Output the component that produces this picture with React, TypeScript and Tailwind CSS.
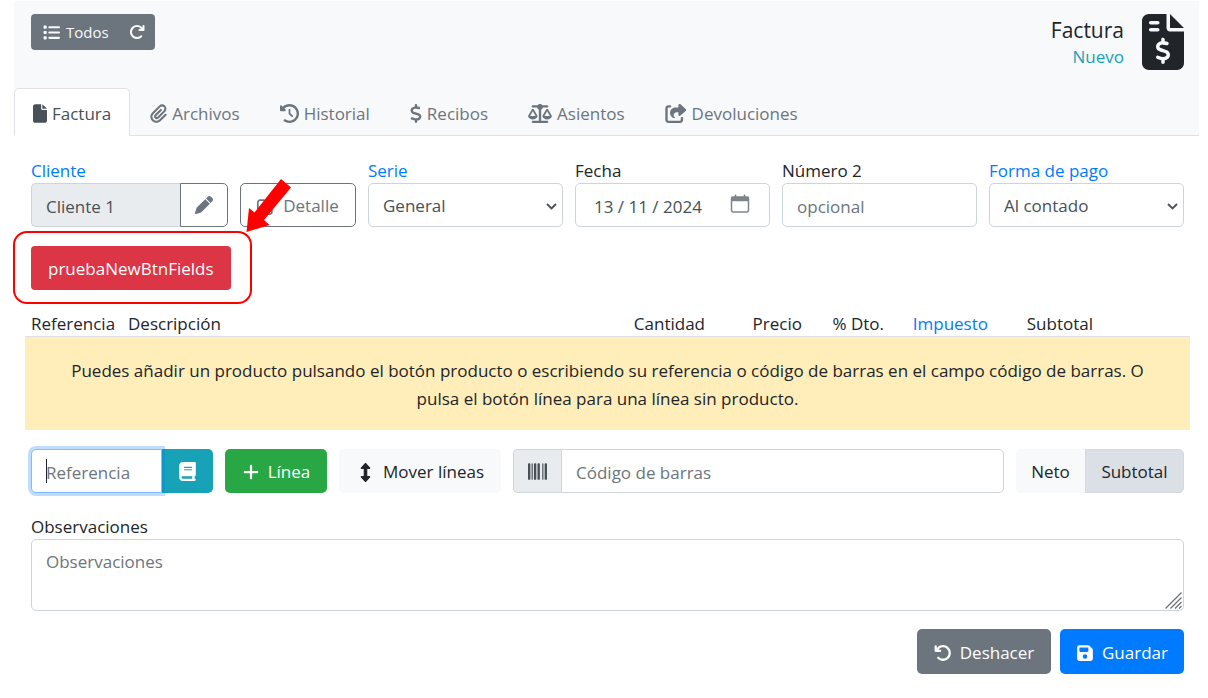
import { FaArrowRotateLeft, FaArrowRotateRight, FaBarcode, FaBook, FaClockRotateLeft, FaDollarSign, FaFile, FaFileInvoiceDollar, FaFloppyDisk, FaList, FaPaperclip, FaPen, FaPlus, FaRegPenToSquare, FaScaleBalanced, FaShareFromSquare, FaUpDown } from "react-icons/fa6";

const tabs = [
  { name: "Factura", icon: FaFile, iconClass: "w-3.5 h-[19px]" },
  { name: "Archivos", icon: FaPaperclip, iconClass: "w-[17px] h-[19px]" },
  { name: "Historial", icon: FaClockRotateLeft, iconClass: "w-[19px] h-[19px]" },
  { name: "Recibos", icon: FaDollarSign, iconClass: "w-3 h-[19px]" },
  { name: "Asientos", icon: FaScaleBalanced, iconClass: "w-6 h-[19px]" },
  { name: "Devoluciones", icon: FaShareFromSquare, iconClass: "w-[22px] h-[19px]" },
];

const inputClass = "h-11 w-full min-w-0 rounded-[5px] border border-[#ced4da] bg-white px-3.5 pt-0.5 text-[#495057] placeholder:text-[#6c757d] outline-none";

function Header() {
  return (
    <header className="bg-[#f8f9fa] mt-px">
      <div className="flex items-start justify-between pt-[13px] pl-[17px] pr-[15px] h-[87px]">
        <div className="flex rounded-[4px] bg-[#6c757d] text-[#f8f9fa] text-[15px]">
          <button type="button" className="flex items-center gap-1.5 h-9 pl-3 pr-2.5">
            <FaList size={17} />
            Todos
          </button>
          <button type="button" aria-label="Recargar" className="h-9 px-2.5">
            <FaArrowRotateRight size={16} />
          </button>
        </div>
        <div className="flex items-start gap-[18px]">
          <div className="text-right pt-0.5">
            <h1 className="text-[21px] leading-[28px] text-[#212529]">Factura</h1>
            <p className="leading-[26px] text-[#17a2b8]">Nuevo</p>
          </div>
          <FaFileInvoiceDollar size={56} className="w-[42px] text-[#212529]" />
        </div>
      </div>
      <nav className="flex border-b border-[#dee2e6]">
        {tabs.map((tab, index) => {
          const TabIcon = tab.icon;
          return (
            <a
              key={tab.name}
              href="#"
              className={
                index === 0
                  ? "flex items-center gap-[5px] h-12 px-[18px] pt-[3px] -mb-px rounded-t-[5px] border border-b-white border-[#dee2e6] bg-white text-[#495057]"
                  : "flex items-center gap-[5px] h-12 px-[19px] pt-[3px] -mb-px border border-transparent text-[#6c757d]"
              }
            >
              <TabIcon className={tab.iconClass} />
              {tab.name}
            </a>
          );
        })}
      </nav>
    </header>
  );
}

function Chevron() {
  return (
    <svg className="pointer-events-none absolute right-1.5 top-[19px]" width="11" height="9" viewBox="0 0 11 9" fill="none" stroke="#495057" strokeWidth="1.8">
      <path d="M1 2l4.5 4.5L10 2" />
    </svg>
  );
}

function SelectField({ id, label, value }: { id: string; label: string; value: string }) {
  return (
    <div>
      <label htmlFor={id} className="block leading-6 text-[#007bff]">{label}</label>
      <div className="relative">
        <select id={id} className={`${inputClass} appearance-none`}>
          <option>{value}</option>
        </select>
        <Chevron />
      </div>
    </div>
  );
}

function Fields() {
  return (
    <div className="grid grid-cols-[minmax(0,5fr)_repeat(4,minmax(0,3fr))] gap-3 pt-[23px]">
      <div>
        <label htmlFor="cliente" className="block leading-6 text-[#007bff]">Cliente</label>
        <div className="flex gap-3">
          <div className="flex flex-1 min-w-0">
            <input id="cliente" readOnly value="Cliente 1" className="h-11 flex-1 min-w-0 rounded-l-[5px] border border-r-0 border-[#ced4da] bg-[#e9ecef] px-3.5 pt-0.5 text-[#495057] outline-none" />
            <button type="button" aria-label="Editar cliente" className="flex items-center justify-center h-11 w-12 rounded-r-[5px] border border-[#6c757d] text-[#6c757d]">
              <FaPen size={18} />
            </button>
          </div>
          <button type="button" className="flex items-center justify-center gap-2 h-11 w-[116px] pt-0.5 rounded-[5px] border border-[#6c757d] text-[#6c757d]">
            <FaRegPenToSquare size={18} />
            Detalle
          </button>
        </div>
      </div>
      <SelectField id="serie" label="Serie" value="General" />
      <div>
        <label htmlFor="fecha" className="block leading-6">Fecha</label>
        <div className="relative">
          <input id="fecha" defaultValue="13 / 11 / 2024" className={`${inputClass} pl-[18px]`} />
          <button type="button" aria-label="Abrir calendario" className="absolute right-5 top-[11px]">
            <svg width="20" height="20" viewBox="0 0 20 20" fill="none" stroke="#7f858b" strokeWidth="1.5">
              <rect x="1.5" y="3" width="17" height="15" rx="2" />
              <path d="M2 3.5h16v3H2z" fill="#7f858b" />
              <path d="M5.5 0.5v3M14.5 0.5v3" />
            </svg>
          </button>
        </div>
      </div>
      <div>
        <label htmlFor="numero2" className="block leading-6">Número 2</label>
        <input id="numero2" placeholder="opcional" className={inputClass} />
      </div>
      <SelectField id="pago" label="Forma de pago" value="Al contado" />
    </div>
  );
}

function TestButton() {
  return (
    <div className="relative mt-[19px] w-fit">
      <button type="button" className="h-11 rounded-[4px] bg-[#dc3545] px-[17px] pt-0.5 text-white">pruebaNewBtnFields</button>
      {/* highlight box and arrow over the new button */}
      <div className="pointer-events-none absolute -left-[18px] -right-[21px] -top-[15px] -bottom-[14px] rounded-[14px] border-2 border-[#ff0000]" />
      <svg className="pointer-events-none absolute -right-[61px] -top-[68px]" width="46" height="54" viewBox="0 0 46 54" fill="#ff0000">
        <path d="M35 1L45 9.5L18 42L23.5 47L0.5 54L3 30L8.5 34.5Z" />
      </svg>
    </div>
  );
}

function Lines() {
  return (
    <table className="mt-[21px] -mx-1.5 w-[calc(100%+12px)] table-fixed">
      <thead>
        <tr className="border-b border-[#dee2e6] leading-[25px]">
          <th className="w-[97px] pl-1.5 text-left font-normal">Referencia</th>
          <th className="pl-1.5 text-left font-normal">Descripción</th>
          <th className="w-[105px] pr-1.5 text-right font-normal">Cantidad</th>
          <th className="w-[97px] pr-1.5 text-right font-normal">Precio</th>
          <th className="w-[82px] pr-1.5 text-right font-normal">% Dto.</th>
          <th className="w-[104px] pr-1.5 text-right font-normal"><a href="#" className="text-[#007bff]">Impuesto</a></th>
          <th className="w-[105px] pr-1.5 text-right font-normal">Subtotal</th>
          <td className="w-[91px]"></td>
        </tr>
      </thead>
      <tbody>
        <tr>
          <td colSpan={8} className="bg-[#ffeeba] px-7 pt-5 pb-[17px] text-center leading-7">
            Puedes añadir un producto pulsando el botón producto o escribiendo su referencia o código de barras en el campo código de barras. O pulsa el botón línea para una línea sin producto.
          </td>
        </tr>
      </tbody>
    </table>
  );
}

function Toolbar() {
  return (
    <div className="mt-[19px] flex gap-3">
      <div className="flex">
        <div className="relative z-10">
          <input aria-label="Referencia" placeholder="Referencia" className="h-11 w-[131px] rounded-l-[5px] border border-[#80bdff] bg-white px-3.5 pt-0.5 caret-transparent shadow-[0_0_0_3px_rgba(0,123,255,0.25)] outline-none placeholder:text-[#6c757d]" />
          <span className="pointer-events-none absolute left-[15px] top-2.5 h-6 w-px bg-[#212529]" />
        </div>
        <button type="button" aria-label="Producto" className="flex items-center justify-center h-11 w-[51px] rounded-r-[5px] bg-[#17a2b8] text-white">
          <FaBook size={19} />
        </button>
      </div>
      <button type="button" className="flex items-center justify-center gap-2 h-11 w-[102px] pt-0.5 rounded-[5px] bg-[#28a745] text-white">
        <FaPlus size={18} />
        Línea
      </button>
      <button type="button" className="flex items-center justify-center gap-2 h-11 w-[162px] pt-0.5 rounded-[5px] bg-[#f8f9fa] text-[#212529]">
        <FaUpDown size={19} />
        Mover líneas
      </button>
      <div className="flex flex-1 min-w-0">
        <label htmlFor="barras" aria-label="Código de barras" className="flex items-center justify-center h-11 w-12 rounded-l-[5px] border border-r-0 border-[#ced4da] bg-[#e9ecef] text-[#495057]">
          <FaBarcode size={19} />
        </label>
        <input id="barras" placeholder="Código de barras" className="h-11 flex-1 min-w-0 rounded-r-[5px] border border-[#ced4da] bg-white px-3.5 pt-0.5 outline-none placeholder:text-[#6c757d]" />
      </div>
      <div className="flex">
        <button type="button" className="h-11 w-[69px] pt-0.5 rounded-l-[5px] bg-[#f8f9fa]">Neto</button>
        <button type="button" className="h-11 w-[99px] pt-0.5 rounded-r-[5px] border border-[#d3d9df] bg-[#dae0e5]">Subtotal</button>
      </div>
    </div>
  );
}

export default function App() {
  return (
    <div className="min-h-screen bg-white pl-3.5 pr-[9px] pb-6 font-['Open_Sans','Noto_Sans',sans-serif] text-[17px] text-[#212529]">
      <Header />
      <main className="pl-[17px] pr-[15px]">
        <Fields />
        <TestButton />
        <Lines />
        <Toolbar />
        <div className="relative mt-[21px]">
          <label htmlFor="observaciones" className="block leading-[25px]">Observaciones</label>
          <textarea id="observaciones" placeholder="Observaciones" className="block h-[72px] w-full resize-none rounded-[5px] border border-[#ced4da] px-3.5 py-2 leading-7 outline-none placeholder:text-[#6c757d]" />
          <svg className="pointer-events-none absolute bottom-0.5 right-0.5" width="17" height="17" viewBox="0 0 17 17" stroke="#6f7275" strokeWidth="1.3">
            <path d="M0.5 16.5L16.5 0.5M5.5 16.5L16.5 5.5M10 16.5L16.5 10M14 16.5L16.5 14" />
          </svg>
        </div>
        <div className="mt-[18px] flex justify-end gap-[9px]">
          <button type="button" className="flex items-center justify-center gap-2 h-[45px] w-[134px] pt-0.5 rounded-[5px] bg-[#6c757d] text-white">
            <FaArrowRotateLeft size={18} />
            Deshacer
          </button>
          <button type="button" className="flex items-center justify-center gap-2 h-[45px] w-[124px] pt-0.5 rounded-[5px] bg-[#007bff] text-white">
            <FaFloppyDisk size={18} />
            Guardar
          </button>
        </div>
      </main>
    </div>
  );
}
